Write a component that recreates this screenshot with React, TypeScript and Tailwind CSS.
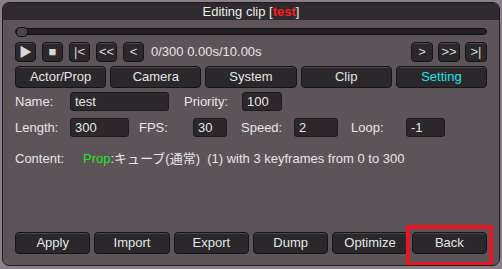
import React from 'react';

const font = { fontFamily: '"Liberation Sans", Arial, "Noto Sans CJK JP", sans-serif' };

const Btn = ({
  children,
  className = '',
  color = 'text-[#e6e6e6]',
}: {
  children: React.ReactNode;
  className?: string;
  color?: string;
}) => (
  <div
    className={`flex items-center justify-center rounded-[4px] border border-[#161416] bg-[#2b282b] text-[13px] shadow-[inset_0_1px_0_#4a454a] ${color} ${className}`}
  >
    {children}
  </div>
);

const Field = ({ value, className = '' }: { value: string; className?: string }) => (
  <div
    className={`flex h-[19px] items-center rounded-[3px] border border-[#1c1a1c] bg-[#2b272a] px-[4px] text-[13px] text-[#e6e6e6] ${className}`}
  >
    {value}
  </div>
);

export default function App() {
  return (
    <div className="h-[269px] w-[502px] bg-[#8a7f8a] pl-[2px] pr-[2px] pt-[2px]" style={font}>
      <div className="flex h-[264px] flex-col overflow-hidden rounded-[7px] border border-[#1e1b1e] bg-[#5d5459]">
        <div className="flex h-[17px] items-center justify-center bg-[#2e2a2e] text-[13px] text-[#ededed]">
          Editing clip [<span className="font-bold text-[#ff1a1a]">test</span>]
        </div>

        <div className="flex flex-col px-[12px]">
          <div className="relative mt-[7px] h-[10px]">
            <div className="absolute left-0 right-0 top-[1px] h-[7px] rounded-full border border-[#111] bg-[#242124]" />
            <div className="absolute left-[1px] top-0 h-[10px] w-[12px] rounded-[4px] border border-[#111] bg-[#4a4649]" />
          </div>

          <div className="mt-[5px] flex h-[20px] items-center">
            <Btn className="h-[20px] w-[21px] text-[11px]" color="text-[#d8d8d8]">▶</Btn>
            <Btn className="ml-[6px] h-[20px] w-[21px] text-[9px]" color="text-[#d8d8d8]">■</Btn>
            <Btn className="ml-[6px] h-[20px] w-[21px] text-[11px]" color="text-[#d8d8d8]">|&lt;</Btn>
            <Btn className="ml-[6px] h-[20px] w-[21px] text-[10px]" color="text-[#d8d8d8]">&lt;&lt;</Btn>
            <Btn className="ml-[6px] h-[20px] w-[21px] text-[11px]" color="text-[#d8d8d8]">&lt;</Btn>
            <span className="ml-[7px] text-[13px] text-[#e6e6e6]">0/300 0.00s/10.00s</span>
            <div className="flex-1" />
            <Btn className="h-[20px] w-[22px] text-[11px]" color="text-[#d8d8d8]">&gt;</Btn>
            <Btn className="ml-[5px] h-[20px] w-[22px] text-[10px]" color="text-[#d8d8d8]">&gt;&gt;</Btn>
            <Btn className="ml-[5px] h-[20px] w-[22px] text-[11px]" color="text-[#d8d8d8]">&gt;|</Btn>
          </div>

          <div className="mt-[4px] grid h-[20px] grid-cols-5 gap-[4px]">
            <Btn>Actor/Prop</Btn>
            <Btn>Camera</Btn>
            <Btn>System</Btn>
            <Btn>Clip</Btn>
            <Btn color="text-[#1ee4ee]">Setting</Btn>
          </div>

          <div className="mt-[6px] flex items-center text-[13px] text-[#e6e6e6]">
            <span className="w-[55px]">Name:</span>
            <Field value="test" className="w-[99px]" />
            <span className="ml-[15px] w-[58px]">Priority:</span>
            <Field value="100" className="w-[40px]" />
          </div>

          <div className="mt-[6px] flex items-center text-[13px] text-[#e6e6e6]">
            <span className="w-[55px]">Length:</span>
            <Field value="300" className="w-[59px]" />
            <span className="ml-[10px] w-[54px]">FPS:</span>
            <Field value="30" className="w-[34px]" />
            <span className="ml-[14px] w-[53px]">Speed:</span>
            <Field value="2" className="w-[44px]" />
            <span className="ml-[13px] w-[55px]">Loop:</span>
            <Field value="-1" className="w-[39px]" />
          </div>

          <div className="mt-[12px] flex items-center text-[13px] text-[#e6e6e6]">
            <span className="w-[68px]">Content:</span>
            <span className="text-[#22e622]">Prop</span>
            <span>:キューブ(通常)&nbsp;&nbsp;(1) with 3 keyframes from 0 to 300</span>
          </div>
        </div>

        <div className="flex-1" />

        <div className="mb-[11px] grid h-[22px] grid-cols-6 gap-[4px] px-[12px]">
          <Btn>Apply</Btn>
          <Btn>Import</Btn>
          <Btn>Export</Btn>
          <Btn>Dump</Btn>
          <Btn>Optimize</Btn>
          <div className="relative">
            <Btn className="h-full w-full">Back</Btn>
            <div className="absolute -bottom-[12px] -left-[6px] -right-[6px] -top-[7px] border-[4px] border-[#e8161e]" />
          </div>
        </div>
      </div>
    </div>
  );
}
